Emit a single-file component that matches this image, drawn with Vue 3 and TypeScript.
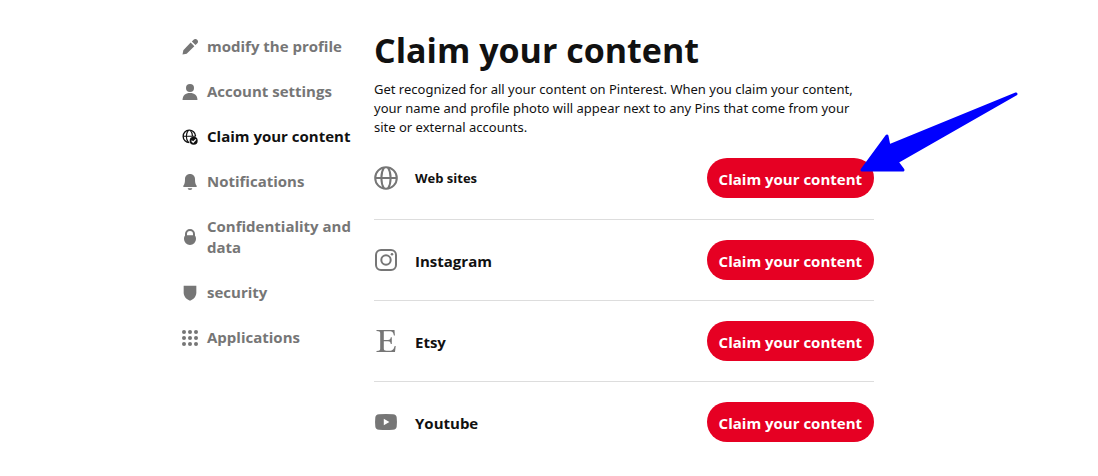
<script setup lang="ts">
interface NavItem {
  id: string
  label: string
  active?: boolean
}

interface Account {
  id: string
  label: string
}

const navItems: NavItem[] = [
  { id: 'pencil', label: 'modify the profile' },
  { id: 'person', label: 'Account settings' },
  { id: 'claim', label: 'Claim your content', active: true },
  { id: 'bell', label: 'Notifications' },
  { id: 'lock', label: 'Confidentiality and data' },
  { id: 'shield', label: 'security' },
  { id: 'apps', label: 'Applications' },
]

const accounts: Account[] = [
  { id: 'web', label: 'Web sites' },
  { id: 'instagram', label: 'Instagram' },
  { id: 'etsy', label: 'Etsy' },
  { id: 'youtube', label: 'Youtube' },
]
</script>

<template>
  <div class="page">
    <nav class="sidebar" aria-label="Settings">
      <a
        v-for="item in navItems"
        :key="item.id"
        href="#"
        class="nav-link"
        :class="{ active: item.active }"
        :aria-current="item.active ? 'page' : undefined"
      >
        <svg class="nav-icon" viewBox="0 0 24 24" fill="currentColor" aria-hidden="true">
          <path
            v-if="item.id === 'pencil'"
            d="M13 5.200l5.500 5.500L7 22 0.800 23.300 2 17zM14.800 3.600l2.600-2.300a3.700 3.700 0 0 1 5.300 5.300l-2.500 2.500z"
          />
          <template v-else-if="item.id === 'person'">
            <circle cx="12" cy="6" r="6" />
            <path d="M0.800 24c0-6.600 4.500-10.500 11.200-10.500S23.200 17.400 23.200 24z" />
          </template>
          <template v-else-if="item.id === 'claim'">
            <g fill="none" stroke="currentColor">
              <path d="M11 20.300A9.300 9.300 0 1 1 20.300 10.500" stroke-width="2" />
              <path
                d="M9.500 20C5.500 15 5.500 7 9.500 2M12.500 2c2.200 2.500 3.200 5.500 3.200 8.500M1.700 10.800h19"
                stroke-width="1.700"
              />
            </g>
            <circle cx="17.500" cy="17.500" r="6" />
            <path d="M14.300 17.500l2.400 2.400 4.200-4.400" fill="none" stroke="#fff" stroke-width="1.800" />
          </template>
          <path
            v-else-if="item.id === 'bell'"
            d="M12 0c4.500 0 7.500 3.300 7.500 7.500 0 5 .5 7.500 2.500 10V19.500H2V17.500c2-2.500 2.500-5 2.500-10C4.500 3.300 7.500 0 12 0zM8.500 21.500h7A3.500 2.500 0 0 1 8.500 21.500z"
          />
          <path
            v-else-if="item.id === 'lock'"
            fill-rule="evenodd"
            d="M4.500 10V7.500a7.500 7.500 0 0 1 15 0V10c1 1 1.500 2.500 1.500 5a9 9 0 0 1-18 0c0-2.500.5-4 1.500-5zM7.500 9.500h9v-2a4.500 4.500 0 0 0-9 0z"
          />
          <path
            v-else-if="item.id === 'shield'"
            d="M2.500 1h19v10c0 6-3.500 10.500-9.500 12.500C6 21.500 2.500 17 2.500 11z"
          />
          <template v-else>
            <template v-for="y in [3, 12, 21]" :key="y">
              <circle v-for="x in [3, 12, 21]" :key="x" :cx="x" :cy="y" r="3" />
            </template>
          </template>
        </svg>
        <span>{{ item.label }}</span>
      </a>
    </nav>

    <main class="content">
      <h1>Claim your content</h1>
      <p class="intro">
        Get recognized for all your content on Pinterest. When you claim your content, your name and
        profile photo will appear next to any Pins that come from your site or external accounts.
      </p>
      <ul class="accounts">
        <li v-for="account in accounts" :key="account.id" class="account" :class="account.id">
          <svg class="account-icon" viewBox="0 0 24 24" aria-hidden="true">
            <g v-if="account.id === 'web'" fill="none" stroke="currentColor" stroke-width="2">
              <circle cx="12" cy="12" r="10.800" />
              <path d="M10 1.500C6.500 7 6.500 17 10 22.500M14 1.500C17.500 7 17.500 17 14 22.500M1 12h22" />
            </g>
            <g v-else-if="account.id === 'instagram'" fill="none" stroke="currentColor" stroke-width="2">
              <rect x="2" y="2" width="20" height="20" rx="5" />
              <circle cx="12" cy="12" r="4.700" />
              <circle cx="18" cy="6.200" r="1.300" fill="currentColor" stroke="none" />
            </g>
            <path
              v-else-if="account.id === 'etsy'"
              fill="currentColor"
              d="M2.500 1H20.500L20.900 6.500H19.900C19.300 3.500 18.500 2.300 15.500 2.300H9.800V11H14C16 11 16.400 10.200 16.800 8.300H17.800V15H16.800C16.400 13 16 12.300 14 12.300H9.800V19.500C9.800 21.300 10.500 21.700 12.500 21.700H15.500C18.800 21.700 19.800 20.200 20.700 17H21.700L21 23H2.500V22L4.500 21.700C5.800 21.500 6.200 21 6.200 19.500V4.500C6.200 3 5.800 2.500 4.500 2.300L2.500 2z"
            />
            <path
              v-else
              fill="currentColor"
              fill-rule="evenodd"
              d="M5 4.200Q12 3.800 19 4.200Q22.500 4.400 22.700 7.500Q23.200 12 22.700 16.500Q22.500 19.600 19 19.800Q12 20.200 5 19.800Q1.500 19.600 1.300 16.500Q.8 12 1.300 7.500Q1.500 4.400 5 4.200zM9.800 8.800v6.400l5.600-3.200z"
            />
          </svg>
          <h2>{{ account.label }}</h2>
          <button type="button">Claim your content</button>
          <svg v-if="account.id === 'web'" class="pointer" viewBox="0 0 158 84" aria-hidden="true">
            <path
              d="M2 79L27 45L29 55L156 3L37 71L43 79z"
              fill="#00f"
              stroke="#00f"
              stroke-width="3"
              stroke-linejoin="round"
            />
          </svg>
        </li>
      </ul>
    </main>
  </div>
</template>

<style>
body {
  margin: 0;
  background: #fff;
}
</style>

<style scoped>
.page {
  display: flex;
  gap: 20px;
  padding: 28px 24px 0 182px;
  font-family: "Open Sans", "Noto Sans", sans-serif;
  color: #111;
}

.sidebar {
  display: flex;
  flex: 0 0 172px;
  flex-direction: column;
  gap: 24px;
  padding-top: 8px;
}

.nav-link {
  display: flex;
  align-items: center;
  gap: 9px;
  color: #767676;
  font-size: 15px;
  font-weight: 700;
  line-height: 21px;
  text-decoration: none;
}

.nav-link.active {
  color: #111;
}

.nav-icon {
  flex: none;
  width: 16px;
  height: 16px;
}

.content {
  flex: 0 1 500px;
  min-width: 0;
}

h1 {
  margin: 0;
  font-size: 34px;
  font-weight: 700;
  line-height: 44px;
}

.intro {
  margin: 8px 0 1px;
  padding-right: 10px;
  font-family: "Noto Sans", "Open Sans", sans-serif;
  font-size: 13px;
  line-height: 19px;
}

.accounts {
  margin: 0;
  padding: 0;
  list-style: none;
}

.account {
  position: relative;
  display: flex;
  align-items: center;
  padding: 20px 0;
  border-bottom: 1px solid #ddd;
}

.account.web {
  padding-bottom: 21px;
}

.account:last-child {
  border-bottom: 0;
}

.account-icon {
  flex: none;
  width: 24px;
  height: 24px;
  color: #767676;
}

h2 {
  flex: 1;
  margin: 0 0 0 17px;
  padding-top: 2px;
  font-size: 15px;
  font-weight: 700;
  line-height: 20px;
}

.web h2 {
  padding-top: 0;
  font-size: 13px;
}

button {
  height: 40px;
  padding: 2px 12px 0;
  border: 0;
  border-radius: 20px;
  background: #e60023;
  color: #fff;
  font-family: inherit;
  font-size: 15px;
  font-weight: 700;
  line-height: 20px;
  white-space: nowrap;
  cursor: pointer;
}

.pointer {
  position: absolute;
  top: -47px;
  left: calc(100% - 14px);
  width: 158px;
  height: 84px;
  pointer-events: none;
}
</style>
